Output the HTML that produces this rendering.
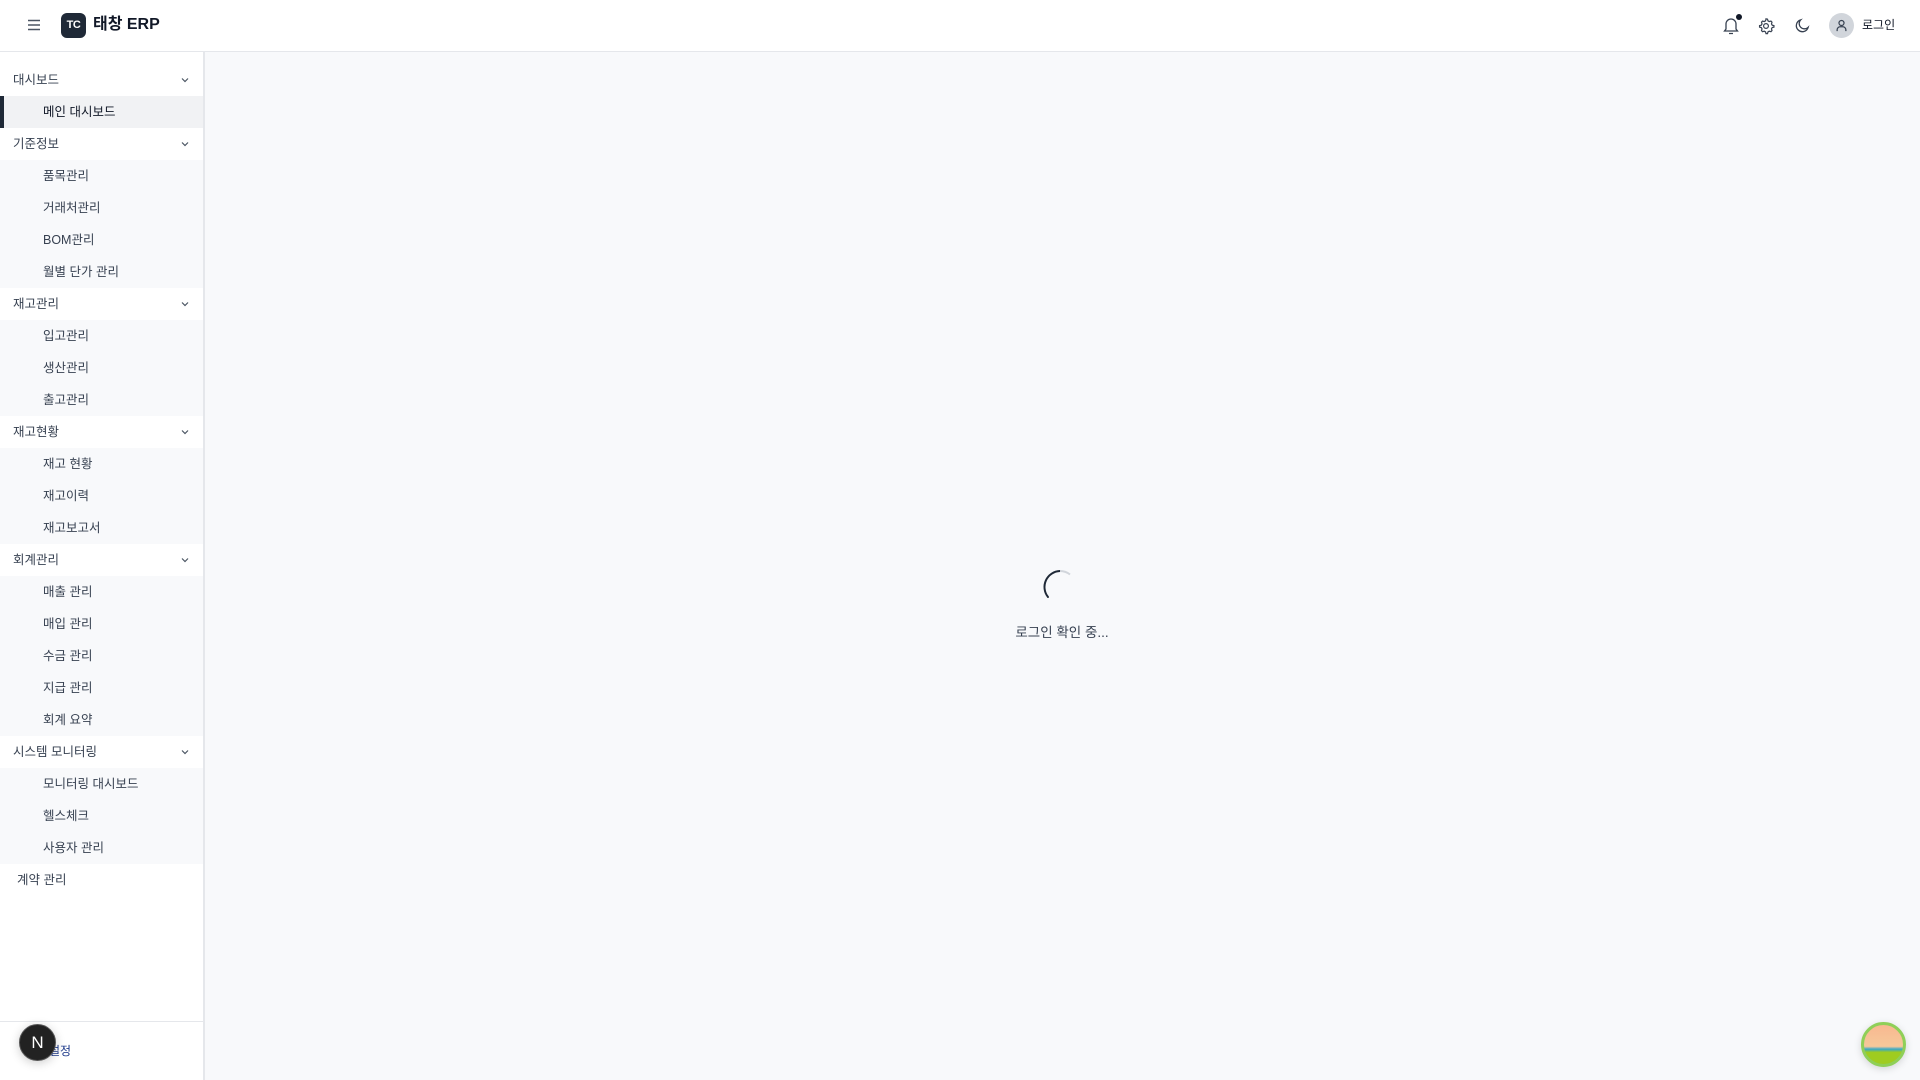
<!DOCTYPE html>
<html><head><meta charset="utf-8"><style>
*{box-sizing:border-box;margin:0;padding:0}
body{width:1920px;height:1080px;overflow:hidden;background:#f8f9fb;font-family:"Liberation Sans","Noto Sans CJK KR",sans-serif;color:#374151;position:relative}
.hdr{position:absolute;left:0;top:0;width:1920px;height:52px;background:#fff;border-bottom:1px solid #e5e7eb}
.side{position:absolute;left:0;top:52px;width:205px;height:1028px;background:#fff;border-right:2px solid #e5e7eb}
.row{position:absolute;left:0;width:203px;height:32px;line-height:32px;font-size:12.5px}
.sec{padding-left:13px;background:#fff}
.sub{padding-left:43px;background:#f8f9fb;color:#374151}
.act{background:#f1f2f4;color:#111827}
.act:before{content:"";position:absolute;left:0;top:0;width:4px;height:32px;background:#1f2937}
.chev{position:absolute;right:14px;top:12px;width:8px;height:8px}
</style></head><body>
<div class="hdr">
<svg style="position:absolute;left:27px;top:18px" width="14" height="14" viewBox="0 0 14 14"><path d="M1 2.5h12M1 7h12M1 11.5h12" stroke="#4b5563" stroke-width="1.4"/></svg>
<div style="position:absolute;left:61px;top:13px;width:25px;height:25px;border-radius:6px;background:#1f2937;color:#fff;font-size:11px;font-weight:bold;line-height:25px;text-align:center;letter-spacing:-0.5px">TC</div>
<div style="position:absolute;left:93px;top:12px;font-size:16px;font-weight:bold;color:#111827;line-height:26px">태창 ERP</div>
<svg style="position:absolute;left:1722px;top:16px" width="18" height="20" viewBox="0 0 18 20"><path d="M4 13V8a5 5 0 0110 0v5l1.5 2h-13z M7 17.5h4" fill="none" stroke="#374151" stroke-width="1.3"/></svg>
<div style="position:absolute;left:1736px;top:14px;width:6px;height:6px;border-radius:50%;background:#111827"></div>
<svg style="position:absolute;left:1757px;top:17px" width="18" height="18" viewBox="0 0 24 24"><path d="M12 2.5l2 .3.6 2.3 1.7 1 2.3-.7 1.4 1.5-.7 2.3 1 1.7 2.3.6v2l-2.3.6-1 1.7.7 2.3-1.4 1.5-2.3-.7-1.7 1-.6 2.3h-2l-.6-2.3-1.7-1-2.3.7-1.4-1.5.7-2.3-1-1.7-2.3-.6v-2l2.3-.6 1-1.7-.7-2.3 1.4-1.5 2.3.7 1.7-1 .6-2.3z" fill="none" stroke="#374151" stroke-width="1.6"/><circle cx="12" cy="12" r="3.2" fill="none" stroke="#374151" stroke-width="1.6"/></svg>
<svg style="position:absolute;left:1794px;top:17px" width="17" height="17" viewBox="0 0 24 24"><path d="M20 14.5A8.5 8.5 0 119.5 4a7 7 0 0010.5 10.5z" fill="none" stroke="#374151" stroke-width="1.8"/></svg>
<div style="position:absolute;left:1829px;top:13px;width:25px;height:25px;border-radius:50%;background:#d1d5db"></div>
<svg style="position:absolute;left:1834px;top:18px" width="15" height="15" viewBox="0 0 24 24"><circle cx="12" cy="8" r="4" fill="none" stroke="#374151" stroke-width="2"/><path d="M5 21v-2a5 5 0 015-5h4a5 5 0 015 5v2" fill="none" stroke="#374151" stroke-width="2"/></svg>
<div style="position:absolute;left:1862px;top:17px;font-size:12px;color:#111827;line-height:16px">로그인</div>
</div>
<div class="side">
<div id="m"></div>
<div style="position:absolute;left:0;top:969px;width:203px;border-top:1px solid #e5e7eb"></div>
<div style="position:absolute;left:49px;top:990px;font-size:12px;color:#1e3a8a">설정</div>
</div>
<script>
var items=[["s","대시보드"],["a","메인 대시보드"],["s","기준정보"],["i","품목관리"],["i","거래처관리"],["i","BOM관리"],["i","월별 단가 관리"],["s","재고관리"],["i","입고관리"],["i","생산관리"],["i","출고관리"],["s","재고현황"],["i","재고 현황"],["i","재고이력"],["i","재고보고서"],["s","회계관리"],["i","매출 관리"],["i","매입 관리"],["i","수금 관리"],["i","지급 관리"],["i","회계 요약"],["s","시스템 모니터링"],["i","모니터링 대시보드"],["i","헬스체크"],["i","사용자 관리"],["c","계약 관리"]];
var h="";items.forEach(function(t,k){var top=12+k*32;
if(t[0]=="s")h+='<div class="row sec" style="top:'+top+'px">'+t[1]+'<svg class="chev" viewBox="0 0 8 8"><path d="M1 2.5l3 3 3-3" fill="none" stroke="#4b5563" stroke-width="1.2"/></svg></div>';
else if(t[0]=="a")h+='<div class="row sub act" style="top:'+top+'px">'+t[1]+'</div>';
else if(t[0]=="c")h+='<div class="row sec" style="top:'+top+'px;padding-left:17px">'+t[1]+'</div>';
else h+='<div class="row sub" style="top:'+top+'px">'+t[1]+'</div>';});
document.getElementById("m").innerHTML=h;
</script>
<svg style="position:absolute;left:1042px;top:569px" width="36" height="36" viewBox="0 0 36 36"><path d="M18 2A16 16 0 006 28" fill="none" stroke="#1f2937" stroke-width="2" stroke-linecap="round"/><path d="M18 2a16 16 0 0110 3.5" fill="none" stroke="#d1d5db" stroke-width="2"/></svg>
<div style="position:absolute;left:962px;top:621px;width:200px;text-align:center;font-size:13.5px;color:#374151">로그인 확인 중...</div>
<div style="position:absolute;left:19px;top:1024px;width:37px;height:37px;border-radius:50%;background:#222;border:1px solid #555;box-shadow:0 2px 10px rgba(0,0,0,.2);color:#fff;font-size:17px;line-height:35px;text-align:center">N</div>
<div style="position:absolute;left:1861px;top:1022px;width:45px;height:45px;border-radius:50%;background:linear-gradient(#f8b890,#f6c89a 55%,#38a8c8 62%,#9fcc20 70%);border:3px solid #8fcf58;box-shadow:0 2px 8px rgba(0,0,0,.15)"></div>
</body></html>
